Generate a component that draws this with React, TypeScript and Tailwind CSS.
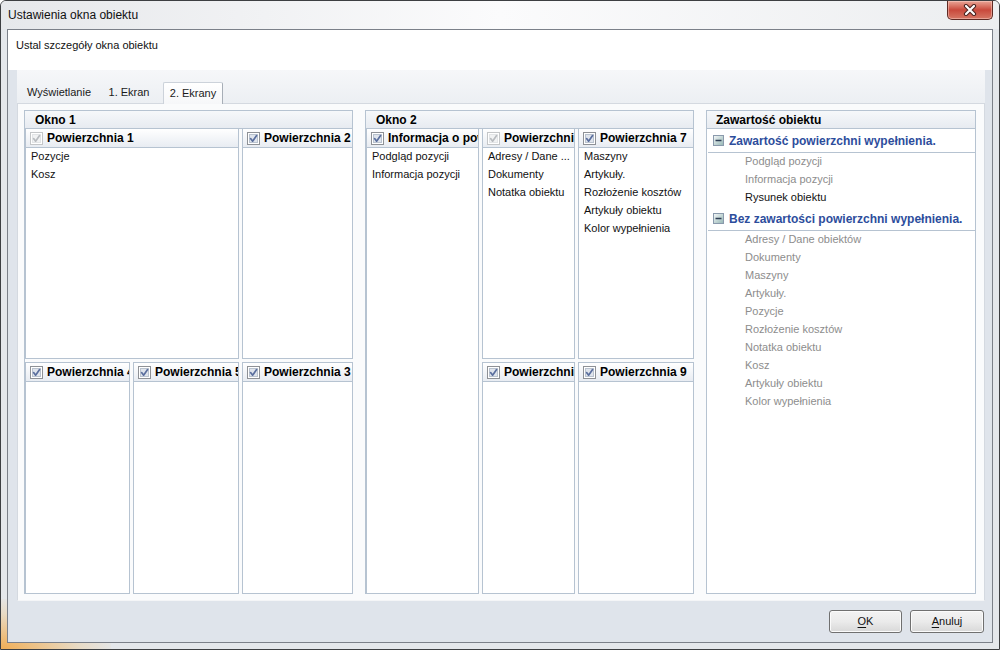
import React from "react";

function Check({ disabled }: { disabled?: boolean }) {
  return (
    <svg width="13" height="13" viewBox="0 0 13 13" className="shrink-0">
      <rect x="0.5" y="0.5" width="12" height="12" fill="#ffffff" stroke={disabled ? "#c4c6c8" : "#8e9196"} />
      <rect x="2" y="2" width="9" height="9" fill={disabled ? "#f1f2f3" : "#dfe4ec"} />
      <rect x="2.5" y="2.5" width="8" height="8" fill="none" stroke={disabled ? "#e2e4e6" : "#b9c2ce"} />
      <path
        d="M3.6 6.6 L5.6 9.2 L9.6 3.6"
        fill="none"
        stroke={disabled ? "#b9bcc0" : "#5b6f9e"}
        strokeWidth="1.7"
        strokeLinecap="round"
        strokeLinejoin="round"
      />
    </svg>
  );
}

function Surface({
  title,
  items = [],
  disabled,
  top,
  className = "",
}: {
  title: string;
  items?: string[];
  disabled?: boolean;
  top?: boolean;
  className?: string;
}) {
  return (
    <div
      className={`flex flex-col bg-white border-[#b6c3d1] border-l border-r border-b ${top ? "border-t" : ""} ${className}`}
    >
      <div className="h-[19px] shrink-0 flex items-center gap-[4px] pl-[4px] border-b border-[#b6c3d1] bg-linear-to-b from-white to-[#e8ecf2] overflow-hidden whitespace-nowrap">
        <Check disabled={disabled} />
        <span className="font-bold text-[12px] leading-none text-black">{title}</span>
      </div>
      <div className="flex flex-col pl-[5px] overflow-hidden">
        {items.map((i) => (
          <div key={i} className="h-[18px] leading-[17px] text-[11px] text-[#111] whitespace-nowrap">
            {i}
          </div>
        ))}
      </div>
    </div>
  );
}

function GroupHeader({ title }: { title: string }) {
  return (
    <div className="h-[19px] shrink-0 flex items-center pl-[10px] border border-[#b6c3d1] bg-linear-to-b from-[#f6f8fa] to-[#e7ebf1]">
      <span className="font-bold text-[12px] leading-none text-black">{title}</span>
    </div>
  );
}

function MinusIcon() {
  return (
    <svg width="11" height="11" viewBox="0 0 11 11" className="shrink-0">
      <defs>
        <linearGradient id="mg" x1="0" y1="0" x2="1" y2="1">
          <stop offset="0" stopColor="#f7f9fa" />
          <stop offset="1" stopColor="#93b5b3" />
        </linearGradient>
      </defs>
      <rect x="0.5" y="0.5" width="10" height="10" fill="url(#mg)" stroke="#8a9aac" />
      <path d="M2.5 5.5 H8.5" stroke="#2f3f55" strokeWidth="1.4" />
    </svg>
  );
}

function TreeHeader({ title }: { title: string }) {
  return (
    <div className="h-[24px] shrink-0 flex items-center gap-[5px] pl-[5px] ml-[1px] border-b border-[#b6c3d1]">
      <MinusIcon />
      <span className="font-bold text-[12px] leading-none text-[#2d4d9c] whitespace-nowrap">{title}</span>
    </div>
  );
}

function TreeItem({ text, dark }: { text: string; dark?: boolean }) {
  return (
    <div className={`h-[18px] leading-[17px] pl-[38px] text-[11px] whitespace-nowrap ${dark ? "text-[#111]" : "text-[#8d8d8d]"}`}>
      {text}
    </div>
  );
}

export default function App() {
  return (
    <div className="w-[1000px] h-[650px] relative flex flex-col overflow-hidden rounded-t-[6px] border border-[#3d3f42] bg-[#e4e7eb] font-['Liberation_Sans',Arial,sans-serif] text-black">
      <div className="absolute left-0 bottom-0 w-[110px] h-[50px] bg-[radial-gradient(ellipse_at_bottom_left,rgba(242,168,70,0.9),rgba(242,190,110,0.3)_50%,transparent_75%)] pointer-events-none" />
      {/* title bar */}
      <div className="h-[28px] shrink-0 flex items-start bg-linear-to-r from-[#e6e8eb] via-[#fbfbfc] to-[#eceef0] relative">
        <div className="self-center pl-[7px] text-[12px] leading-none text-[#111]">Ustawienia okna obiektu</div>
        <div className="ml-auto mr-[6px] w-[46px] h-[19px] rounded-b-[5px] border border-t-0 border-[#5e2a24] bg-linear-to-b from-[#e9a597] via-[#c9493c] to-[#d67665] flex items-center justify-center shadow-[inset_0_0_0_1px_rgba(255,220,210,0.45)]">
          <svg width="14" height="12" viewBox="0 0 14 12">
            <path d="M3 2 L11 10 M11 2 L3 10" stroke="#4a2420" strokeWidth="4.2" strokeLinecap="round" />
            <path d="M3 2 L11 10 M11 2 L3 10" stroke="#ffffff" strokeWidth="2.2" strokeLinecap="round" />
          </svg>
        </div>
      </div>

      {/* client */}
      <div className="relative z-10 flex-1 mx-[6px] mb-[6px] border border-[#7b8089] flex flex-col bg-[#dfe4eb]">
        <div className="h-[40px] shrink-0 bg-white pl-[8px] pt-[8px] text-[11px] leading-[14px] text-[#111]">
          Ustal szczegóły okna obiektu
        </div>

        <div className="pl-[9px] pr-[7px] flex flex-col">
          {/* tab strip */}
          <div className="h-[33px] flex items-end bg-linear-to-b from-[#f6f7f9] to-[#eceff3]">
            <div className="ml-[1px] w-[82px] h-[22px] flex items-center justify-center text-[11px] text-[#1a1a1a]">
              Wyświetlanie
            </div>
            <div className="w-[58px] h-[22px] flex items-center justify-center text-[11px] text-[#1a1a1a]">
              1. Ekran
            </div>
            <div className="ml-[5px] w-[60px] h-[22px] -mb-[1px] relative z-10 flex items-center justify-center text-[11px] text-[#1a1a1a] bg-linear-to-b from-white to-[#f6f7f9] border border-b-0 border-[#ccd2da] border-r-[#a7aeb7] rounded-t-[2px]">
              2. Ekrany
            </div>
          </div>

          {/* panel */}
          <div className="h-[498px] border border-[#d4d9e0] border-b-[#f4f5f7] bg-[#fafbfc] pl-[6px] pr-[8px] pt-[6px] pb-[6px] flex gap-[12px]">
            {/* Okno 1 */}
            <div className="w-[329px] flex flex-col">
              <GroupHeader title="Okno 1" />
              <div className="flex-1 flex flex-col gap-[3px] border-l border-[#b6c3d1]">
                <div className="h-[230px] flex gap-[3px]">
                  <Surface className="w-[214px]" title="Powierzchnia 1" disabled items={["Pozycje", "Kosz"]} />
                  <Surface className="w-[111px]" title="Powierzchnia 2" />
                </div>
                <div className="flex-1 flex gap-[3px]">
                  <Surface top className="w-[105px]" title="Powierzchnia 4" />
                  <Surface top className="w-[106px]" title="Powierzchnia 5" />
                  <Surface top className="w-[111px]" title="Powierzchnia 3" />
                </div>
              </div>
            </div>

            {/* Okno 2 */}
            <div className="w-[329px] flex flex-col">
              <GroupHeader title="Okno 2" />
              <div className="flex-1 flex gap-[3px] border-l border-[#b6c3d1]">
                <Surface
                  className="w-[113px]"
                  title="Informacja o powierzchni"
                  items={["Podgląd pozycji", "Informacja pozycji"]}
                />
                <div className="w-[212px] flex flex-col gap-[3px]">
                  <div className="h-[230px] flex gap-[3px]">
                    <Surface
                      className="w-[93px]"
                      title="Powierzchnia 6"
                      disabled
                      items={["Adresy / Dane ...", "Dokumenty", "Notatka obiektu"]}
                    />
                    <Surface
                      className="w-[116px]"
                      title="Powierzchnia 7"
                      items={["Maszyny", "Artykuły.", "Rozłożenie kosztów", "Artykuły obiektu", "Kolor wypełnienia"]}
                    />
                  </div>
                  <div className="flex-1 flex gap-[3px]">
                    <Surface top className="w-[93px]" title="Powierzchnia 8" />
                    <Surface top className="w-[116px]" title="Powierzchnia 9" />
                  </div>
                </div>
              </div>
            </div>

            {/* Zawartość obiektu */}
            <div className="w-[270px] flex flex-col border border-[#b6c3d1] bg-white">
              <div className="h-[18px] shrink-0 flex items-center pl-[9px] border-b border-[#b6c3d1] bg-linear-to-b from-[#f6f8fa] to-[#e7ebf1]">
                <span className="font-bold text-[12px] leading-none text-black">Zawartość obiektu</span>
              </div>
              <TreeHeader title="Zawartość powierzchni wypełnienia." />
              <TreeItem text="Podgląd pozycji" />
              <TreeItem text="Informacja pozycji" />
              <TreeItem text="Rysunek obiektu" dark />
              <TreeHeader title="Bez zawartości powierzchni wypełnienia." />
              <TreeItem text="Adresy / Dane obiektów" />
              <TreeItem text="Dokumenty" />
              <TreeItem text="Maszyny" />
              <TreeItem text="Artykuły." />
              <TreeItem text="Pozycje" />
              <TreeItem text="Rozłożenie kosztów" />
              <TreeItem text="Notatka obiektu" />
              <TreeItem text="Kosz" />
              <TreeItem text="Artykuły obiektu" />
              <TreeItem text="Kolor wypełnienia" />
            </div>
          </div>
        </div>

        {/* footer */}
        <div className="flex-1 flex justify-end items-start pt-[9px] pr-[8px] gap-[8px]">
          <button className="w-[73px] h-[23px] rounded-[3px] border border-[#707070] bg-linear-to-b from-[#f3f3f3] via-[#ebebeb] to-[#d8d8d8] shadow-[inset_0_0_0_1px_#fbfbfb] text-[11px] text-[#111] leading-none">
            <span className="underline underline-offset-2">O</span>K
          </button>
          <button className="w-[74px] h-[23px] rounded-[3px] border border-[#707070] bg-linear-to-b from-[#f3f3f3] via-[#ebebeb] to-[#d8d8d8] shadow-[inset_0_0_0_1px_#fbfbfb] text-[11px] text-[#111] leading-none">
            <span className="underline underline-offset-2">A</span>nuluj
          </button>
        </div>
      </div>
    </div>
  );
}
